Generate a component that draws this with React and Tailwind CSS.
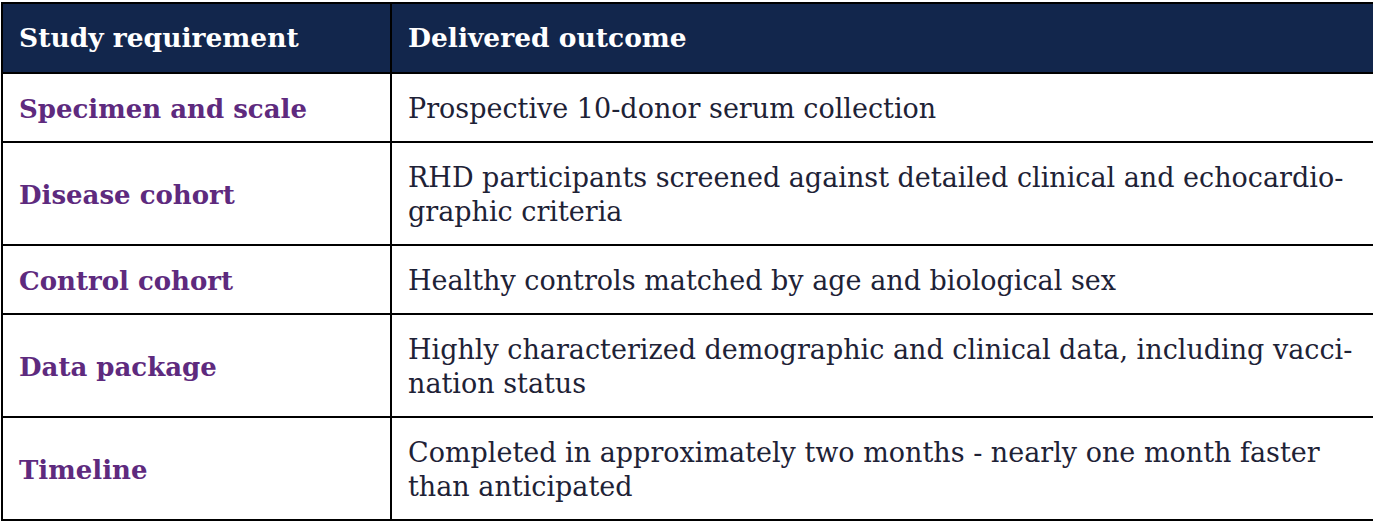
const ROWS = [
  ["Specimen and scale", ["Prospective 10-donor serum collection"]],
  ["Disease cohort", ["RHD participants screened against detailed clinical and echocardio-", "graphic criteria"]],
  ["Control cohort", ["Healthy controls matched by age and biological sex"]],
  ["Data package", ["Highly characterized demographic and clinical data, including vacci-", "nation status"]],
  ["Timeline", ["Completed in approximately two months - nearly one month faster", "than anticipated"]],
];

export default function App() {
  return (
    <div className="bg-white pt-[2px] pl-[1px] overflow-hidden w-[1373px] h-[524px]">
      <table
        className="w-[1380px] border-collapse leading-[34px] table-fixed"
        style={{ fontFamily: '"DejaVu Serif", "Liberation Serif", serif' }}
      >
        <colgroup>
          <col className="w-[389px]" />
          <col />
        </colgroup>
        <thead>
          <tr className="bg-[#12264c] text-white h-[70px] text-[26.5px]">
            <th className="border-2 border-black text-left font-bold px-4">Study requirement</th>
            <th className="border-2 border-black text-left font-bold px-4">Delivered outcome</th>
          </tr>
        </thead>
        <tbody>
          {ROWS.map(([req, lines]) => (
            <tr key={req}>
              <td className="border-2 border-black px-4 pt-[18px] pb-[15px] font-bold text-[26px] text-[#5e2a7e] align-middle">{req}</td>
              <td className="border-2 border-black px-4 pt-[18px] pb-[15px] text-[27px] text-[#1e2236] align-middle whitespace-nowrap">
                {lines.map((l, i) => (
                  <div key={i}>{l}</div>
                ))}
              </td>
            </tr>
          ))}
        </tbody>
      </table>
    </div>
  );
}
